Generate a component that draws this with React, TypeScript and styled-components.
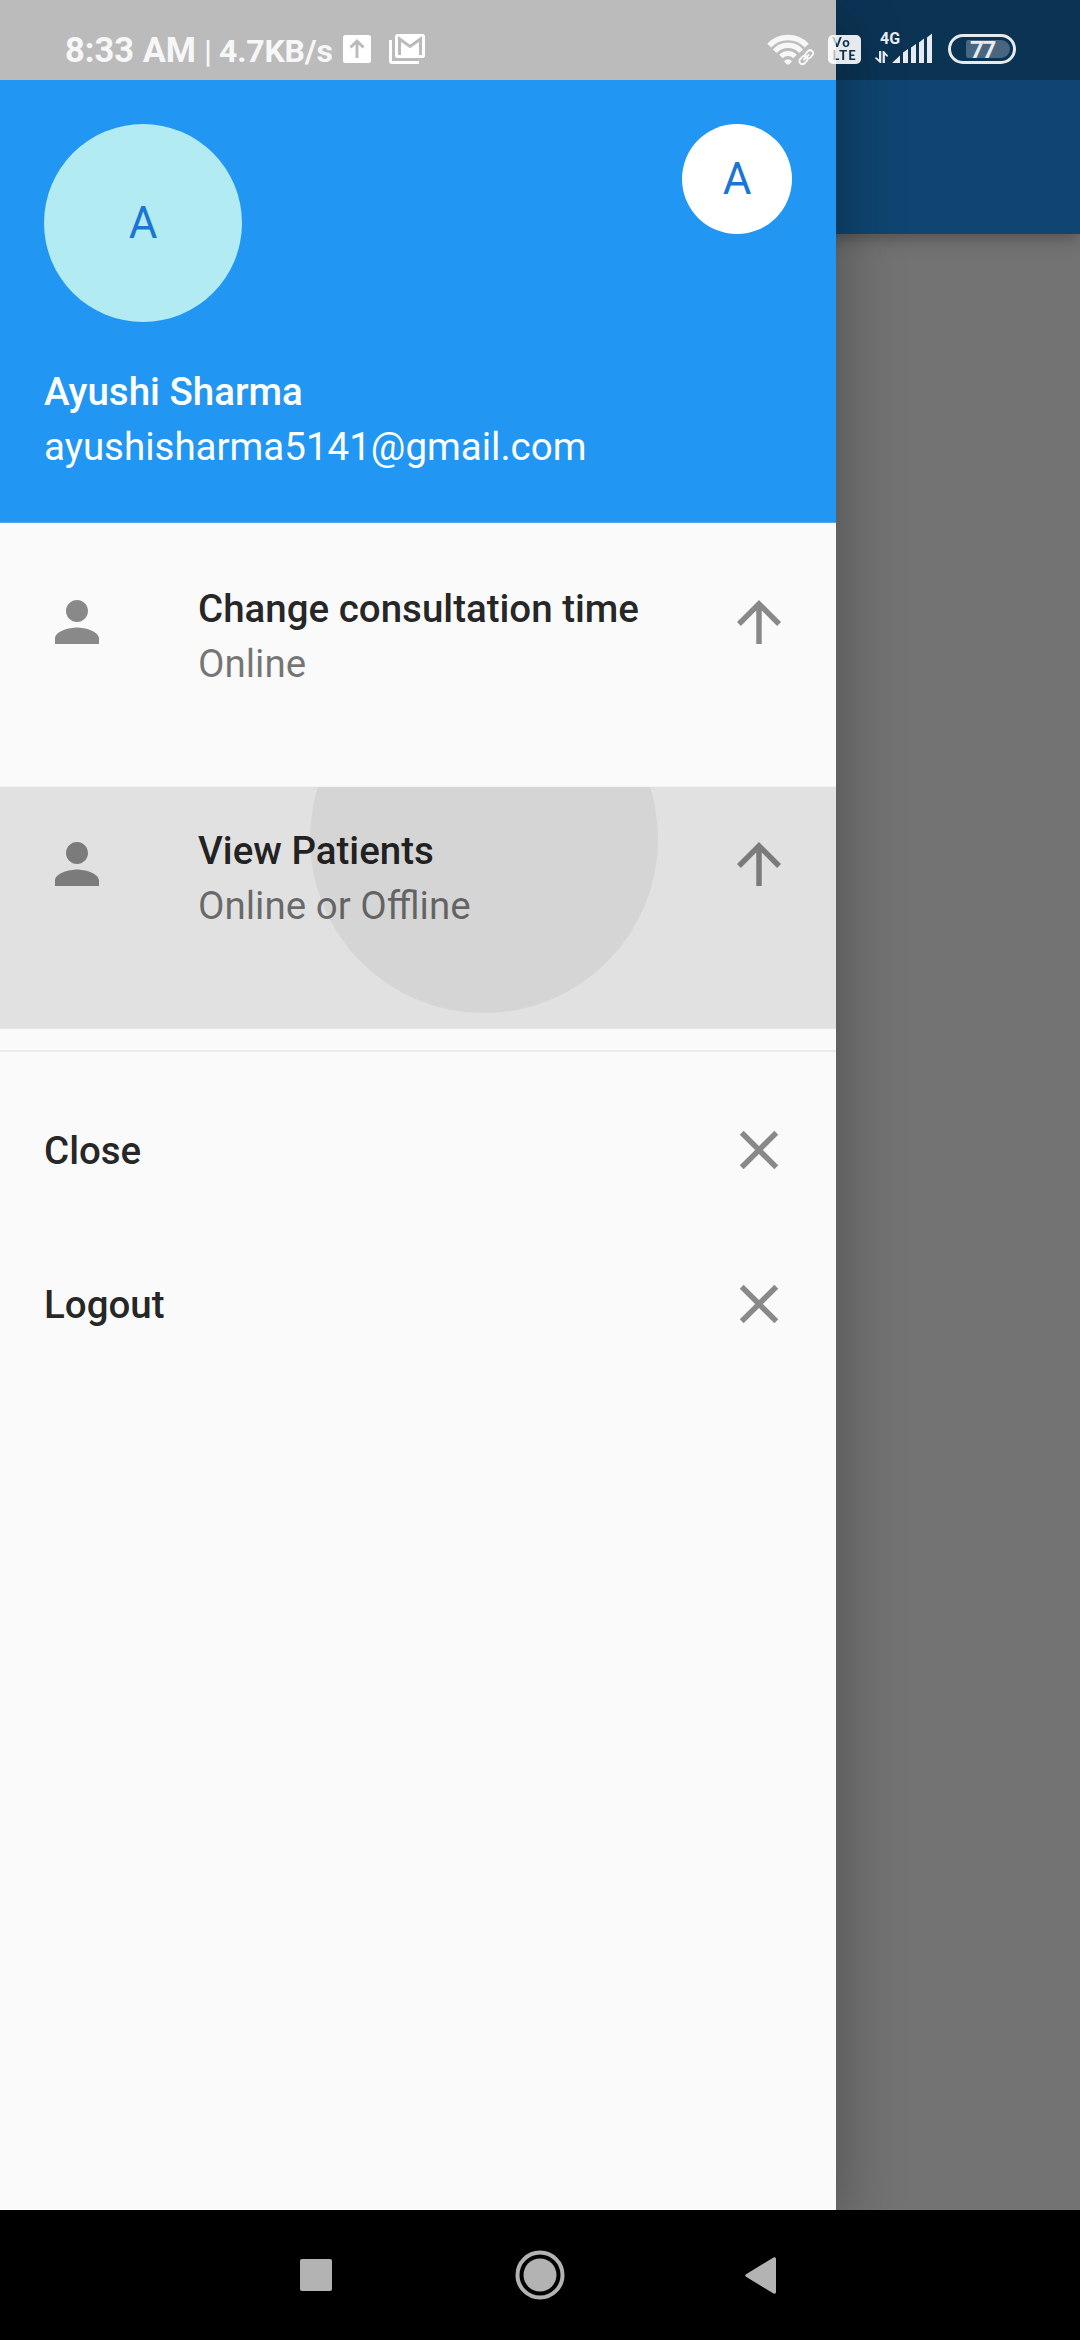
import React from "react";
import styled, { createGlobalStyle } from "styled-components";

const GlobalStyle = createGlobalStyle`
  * { box-sizing: border-box; }
  body { margin: 0; background: #000; }
`;

const Screen = styled.div`
  width: 1080px;
  height: 2340px;
  display: flex;
  flex-direction: column;
  overflow: hidden;
  font-family: Roboto, "Noto Sans", sans-serif;
  font-size: 38.5px;
  line-height: 55px;
`;

/* The page, its scrim, the drawer and the system bar are layers of one cell. */
const Layers = styled.div`
  flex: 1;
  display: grid;
  grid-template: 100% / 100%;
  overflow: hidden;
  > * { grid-area: 1 / 1; }
`;

const Page = styled.main`
  display: flex;
  flex-direction: column;
  background: #fafafa;
`;

const AppBar = styled.header`
  height: 234px;
  background: #2196f3;
  box-shadow: 0 5px 11px -3px rgba(0, 0, 0, 0.14), 0 9px 14px rgba(0, 0, 0, 0.1),
    0 3px 27px rgba(0, 0, 0, 0.08);
`;

const Scrim = styled.div`
  background: rgba(0, 0, 0, 0.54);
`;

const Drawer = styled.aside`
  width: 836px;
  display: flex;
  flex-direction: column;
  padding-top: 80px;
  background: #fafafa;
  box-shadow: 0 20px 62px rgba(0, 0, 0, 0.33);
`;

const Account = styled.section`
  height: 443px;
  padding: 44px 44px 0;
  display: flex;
  flex-direction: column;
  background: #2196f3;
  border-bottom: 1px solid #52a7ea;
  color: #fff;
`;

const Pictures = styled.div`
  display: flex;
  justify-content: space-between;
  align-items: flex-start;
  margin-bottom: 42px;
`;

const Avatar = styled.div<{ $size: number; $fill: string }>`
  width: ${(p) => p.$size}px;
  height: ${(p) => p.$size}px;
  border-radius: 50%;
  background: ${(p) => p.$fill};
  color: #1976d2;
  font-size: 44px;
  display: flex;
  align-items: center;
  justify-content: center;
`;

const Name = styled.div`
  font-weight: 500;
`;

const Email = styled.div``;

const Menu = styled.nav`
  padding-top: 22px;
  display: flex;
  flex-direction: column;
`;

const Tile = styled.div<{ $pressed?: boolean }>`
  position: relative;
  height: 242px;
  padding: 44px 44px 0;
  display: flex;
  align-items: flex-start;
  overflow: hidden;
  ${(p) =>
    p.$pressed &&
    "background: #e1e1e1; border-bottom: 1px solid #e7e7e7; box-shadow: 0 -1px 0 #f3f3f3;"}
`;

const Ripple = styled.span`
  position: absolute;
  left: 310px;
  top: -122px;
  width: 348px;
  height: 348px;
  border-radius: 50%;
  background: #d5d5d5;
`;

const Leading = styled.div`
  position: relative;
  width: 154px;
  height: 66px;
`;

const Labels = styled.div`
  position: relative;
  flex: 1;
  margin-top: -8px;
`;

const Trailing = styled.div`
  position: relative;
  height: 66px;
`;

const Title = styled.div`
  font-weight: 500;
  color: rgba(0, 0, 0, 0.87);
`;

const Subtitle = styled.div`
  color: rgba(0, 0, 0, 0.54);
`;

const Divider = styled.hr`
  width: 100%;
  height: 2px;
  margin: 21px 0;
  border: 0;
  background: #ebebeb;
`;

const Action = styled.div`
  height: 154px;
  padding: 0 44px;
  display: flex;
  align-items: center;
  justify-content: space-between;
`;

const Glyph = styled.svg`
  display: block;
  width: 66px;
  height: 66px;
  fill: rgba(0, 0, 0, 0.45);
`;

const StatusBar = styled.div`
  position: relative;
  height: 80px;
  padding: 0 64px 0 65px;
  display: flex;
  justify-content: space-between;
  background: rgba(0, 0, 0, 0.25);
  color: #f7f7f7;
`;

const StatusGroup = styled.div`
  display: flex;
  align-items: flex-start;
`;

const StatusTexts = styled.div`
  display: flex;
  align-items: baseline;
  padding-top: 21px;
  line-height: 59px;
  white-space: pre;
`;

const Clock = styled.span`
  width: 139px;
  font-size: 34.5px;
  font-weight: 700;
`;

const Separator = styled.span`
  width: 15px;
  font-size: 32px;
  font-weight: 500;
`;

const Speed = styled.span`
  width: 124px;
  font-size: 32px;
  font-weight: 700;
  letter-spacing: -0.2px;
`;

const StatusIcon = styled.svg<{ $top: number; $gap: number }>`
  display: block;
  margin-top: ${(p) => p.$top}px;
  margin-right: ${(p) => p.$gap}px;
`;

const Volte = styled.div`
  width: 33px;
  height: 29px;
  margin: 35px 14px 0 0;
  border-radius: 5px;
  background: rgba(255, 255, 255, 0.9);
`;

/* The letters look cut out: they take the colours on both sides of the drawer's edge. */
const VolteText = styled.div`
  padding: 1px 0 0 4.5px;
  height: 29px;
  font: 900 13px/13px Lato, sans-serif;
  background: linear-gradient(90deg, #bbb 8px, #0d3151 8px);
  background-clip: text;
  -webkit-background-clip: text;
  color: transparent;
`;

const VolteLine = styled.div<{ $spacing: number }>`
  letter-spacing: ${(p) => p.$spacing}px;
`;

const Cellular = styled.div`
  width: 57px;
  margin: 30px 16px 0 0;
  display: grid;
  color: #e7eaee;
  > * { grid-area: 1 / 1; }
`;

const Network = styled.span`
  padding-left: 5px;
  font-size: 16px;
  font-weight: 700;
  line-height: 17px;
`;

const Battery = styled.div`
  width: 68px;
  height: 30px;
  margin-top: 34px;
  padding: 3px 3px 3px 15px;
  border: 3px solid #e7eaee;
  border-radius: 15px;
`;

const Charge = styled.div`
  height: 18px;
  width: 44px;
  padding-left: 4px;
  border-radius: 2px 9px 9px 2px;
  background: rgba(255, 255, 255, 0.25);
  color: #e7eaee;
  font-size: 24.5px;
  font-weight: 700;
  line-height: 19px;
  letter-spacing: -1.8px;
`;

const NavBar = styled.footer`
  height: 130px;
  display: flex;
  align-items: center;
  justify-content: space-between;
  padding: 0 304px 0 300px;
  background: #000;
`;

const NavIcon = styled.svg<{ $nudge?: number }>`
  display: block;
  margin-left: ${(p) => p.$nudge ?? 0}px;
  fill: #b3b3b3;
`;

const Person = () => (
  <Glyph viewBox="0 0 24 24">
    <path d="M12 12c2.21 0 4-1.79 4-4s-1.79-4-4-4-4 1.79-4 4 1.79 4 4 4zm0 2c-2.67 0-8 1.34-8 4v2h16v-2c0-2.66-5.33-4-8-4z" />
  </Glyph>
);

const ArrowUp = () => (
  <Glyph viewBox="0 0 24 24">
    <path d="M4 12l1.41 1.41L11 7.83V20h2V7.83l5.58 5.59L20 12l-8-8-8 8z" />
  </Glyph>
);

const Cross = () => (
  <Glyph viewBox="0 0 24 24">
    <path d="M19 6.41L17.59 5 12 10.59 6.41 5 5 6.41 10.59 12 5 17.59 6.41 19 12 13.41 17.59 19 19 17.59 13.41 12z" />
  </Glyph>
);

const UploadBadge = () => (
  <StatusIcon $top={35} $gap={18} width="28" height="28" viewBox="0 0 28 28">
    <rect width="28" height="28" rx="2.5" fill="#fff" />
    <path d="M14 23V7M7.5 12.5L14 6L20.5 12.5" fill="none" stroke="#bbb" strokeWidth="2.9" />
  </StatusIcon>
);

const MailStack = () => (
  <StatusIcon $top={34} $gap={0} width="36" height="30" viewBox="0 0 36 30">
    <rect x="6" width="30" height="24" rx="2.5" fill="#fff" />
    <path d="M10.500 21V5L21 12.500L31.500 5V21" fill="none" stroke="#bbb" strokeWidth="3" />
    <path d="M1.500 6V27Q1.500 28.500 3 28.500H30" fill="none" stroke="#fff" strokeWidth="3" />
  </StatusIcon>
);

const Wifi = () => (
  <StatusIcon $top={33} $gap={12} width="50" height="34" viewBox="0 0 50 34" fill="none" stroke="#f7f7f7">
    <path d="M3.2 12.600A26 26 0 0 1 40.8 12.600" strokeWidth="5.500" />
    <path d="M8.8 18.200A17.600 17.600 0 0 1 35.200 18.200" strokeWidth="5.300" />
    <path d="M15 23.500A9.500 9.500 0 0 1 29 23.500" strokeWidth="5" />
    <path d="M18 28.200Q22 24.200 26 28.200L23.500 31Q22 32.200 20.500 31Z" fill="#f7f7f7" stroke="none" />
    <g transform="translate(40.300 24.200) rotate(-45)" strokeWidth="1.900">
      <rect x="-8.500" y="-3" width="9" height="6" rx="3" />
      <rect x="-0.500" y="-3" width="9" height="6" rx="3" />
      <path d="M-4 0H4" />
    </g>
  </StatusIcon>
);

const SignalBars = () => (
  <svg width="57" height="34" viewBox="0 0 57 34" fill="#e7eaee">
    <path d="M17 33L25 25.500V33ZM28 33V22.500L33 19V33ZM36 33V17.500L41 14V33ZM44 33V12.500L49 8.500V33ZM52 33V7.500L57 3.500V33Z" />
    <path d="M4 21H6.300V33H5L0 28.300L1 27L4 29.500ZM7.600 33V21H9L13.200 25.800L12.200 27L9.900 25V33Z" />
  </svg>
);

const menu = [
  { title: "Change consultation time", subtitle: "Online", pressed: false },
  { title: "View Patients", subtitle: "Online or Offline", pressed: true },
];

const actions = ["Close", "Logout"];

export default function App() {
  return (
    <Screen>
      <GlobalStyle />
      <Layers>
        <Page>
          <AppBar />
        </Page>
        <Scrim />
        <Drawer>
          <Account>
            <Pictures>
              <Avatar $size={198} $fill="#b2ebf2">A</Avatar>
              <Avatar $size={110} $fill="#fff">A</Avatar>
            </Pictures>
            <Name>Ayushi Sharma</Name>
            <Email>ayushisharma5141@gmail.com</Email>
          </Account>
          <Menu>
            {menu.map((item) => (
              <Tile key={item.title} $pressed={item.pressed}>
                {item.pressed && <Ripple />}
                <Leading>
                  <Person />
                </Leading>
                <Labels>
                  <Title>{item.title}</Title>
                  <Subtitle>{item.subtitle}</Subtitle>
                </Labels>
                <Trailing>
                  <ArrowUp />
                </Trailing>
              </Tile>
            ))}
            <Divider />
            {actions.map((label) => (
              <Action key={label}>
                <Title>{label}</Title>
                <Cross />
              </Action>
            ))}
          </Menu>
        </Drawer>
        <StatusBar>
          <StatusGroup>
            <StatusTexts>
              <Clock>8:33 AM</Clock>
              <Separator>|</Separator>
              <Speed>4.7KB/s</Speed>
            </StatusTexts>
            <UploadBadge />
            <MailStack />
          </StatusGroup>
          <StatusGroup>
            <Wifi />
            <Volte>
              <VolteText>
                <VolteLine $spacing={1.8}>Vo</VolteLine>
                <VolteLine $spacing={1.1}>LTE</VolteLine>
              </VolteText>
            </Volte>
            <Cellular>
              <Network>4G</Network>
              <SignalBars />
            </Cellular>
            <Battery>
              <Charge>77</Charge>
            </Battery>
          </StatusGroup>
        </StatusBar>
      </Layers>
      <NavBar>
        <NavIcon width="32" height="32">
          <rect width="32" height="32" rx="2" />
        </NavIcon>
        <NavIcon $nudge={3} width="50" height="50">
          <circle cx="25" cy="25" r="22.500" fill="none" stroke="#b3b3b3" strokeWidth="4" />
          <circle cx="25" cy="25" r="16.500" />
        </NavIcon>
        <NavIcon width="31" height="37">
          <path d="M1 17.300L28.500 0.500Q31 -0.300 31 2V35Q31 37.300 28.500 36.500L1 19.700Q-0.500 18.500 1 17.300Z" />
        </NavIcon>
      </NavBar>
    </Screen>
  );
}
